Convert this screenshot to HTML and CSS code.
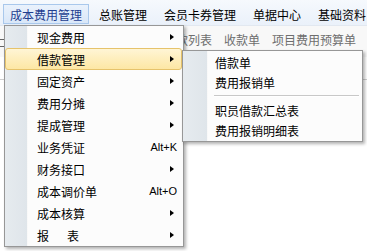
FILE: index.html
```html
<!DOCTYPE html>
<html lang="zh-CN">
<head>
    <meta charset="UTF-8">
    <title>成本费用管理</title>
    <link rel="stylesheet" href="styles.css">
</head>
<body>

<div class="menubar">
    <div class="bar-item active">成本费用管理</div>
    <div class="bar-item">总账管理</div>
    <div class="bar-item">会员卡券管理</div>
    <div class="bar-item">单据中心</div>
    <div class="bar-item">基础资料</div>
</div>

<div class="toolbar">
    <span class="tool-icon"></span>
    <span class="tool">付款列表</span>
    <span class="tool">收款单</span>
    <span class="tool">项目费用预算单</span>
</div>

<div class="content"></div>

<!-- 下拉菜单 -->
<div class="dropdown">
    <div class="menu-item">现金费用<span class="arrow"></span></div>
    <div class="menu-item selected">借款管理<span class="arrow"></span></div>
    <div class="menu-item">固定资产<span class="arrow"></span></div>
    <div class="menu-item">费用分摊<span class="arrow"></span></div>
    <div class="menu-item">提成管理<span class="arrow"></span></div>
    <div class="menu-item">业务凭证<span class="shortcut">Alt+K</span></div>
    <div class="menu-item">财务接口<span class="arrow"></span></div>
    <div class="menu-item">成本调价单<span class="shortcut">Alt+O</span></div>
    <div class="menu-item">成本核算<span class="arrow"></span></div>
    <div class="menu-item">报&emsp;&ensp;表<span class="arrow"></span></div>
</div>

<!-- 子菜单 -->
<div class="submenu">
    <div class="sub-item">借款单</div>
    <div class="sub-item">费用报销单</div>
    <div class="separator"></div>
    <div class="sub-item">职员借款汇总表</div>
    <div class="sub-item">费用报销明细表</div>
</div>

</body>
</html>
```

FILE: styles.css
```css
body {
    margin: 0;
    padding: 0;
    width: 367px;
    height: 251px;
    overflow: hidden;
    position: relative;
    background-color: #ffffff;
    font-family: "Noto Sans CJK SC", "Noto Sans", sans-serif;
    font-size: 12px;
    color: #000;
}

.menubar {
    display: flex;
    align-items: flex-start;
    gap: 3px;
    height: 25px;
    padding-left: 3px;
    background: linear-gradient(#f6f9fd, #eaf1fa);
    box-sizing: border-box;
}

.bar-item {
    margin-top: 4px;
    height: 20px;
    line-height: 19px;
    padding: 0 6px;
    border: 1px solid transparent;
    box-sizing: border-box;
    white-space: nowrap;
}

.bar-item.active {
    background: linear-gradient(#eaf2fc, #d9e7f8);
    border-color: #a9c8ec;
    color: #1e3e90;
}

.toolbar {
    display: flex;
    align-items: center;
    gap: 12px;
    height: 32px;
    padding: 0 0 4px 164px;
    box-sizing: border-box;
    background-color: #f8f8f8;
    border-top: 1px solid #e2e8f0;
    color: #6e6e6e;
    position: relative;
}

.tool {
    white-space: nowrap;
}

/* pequeño icono a la izquierda, casi tapado por el menú */
.tool-icon {
    position: absolute;
    left: 0;
    top: 13px;
    width: 4px;
    height: 6px;
    border-top: 1px solid #666;
    border-bottom: 1px solid #666;
}

.content {
    margin-top: 22px;
    border-top: 1px solid #cfcfcf;
    height: 100px;
}

.dropdown {
    position: absolute;
    left: 4px;
    top: 25px;
    width: 180px;
    border: 1px solid #979797;
    box-sizing: border-box;
    background: linear-gradient(to right, #e6ebef 0, #dfe5ea 22px, #f5f5f5 22px, #fcfcfc 23px, #fcfcfc);
    box-shadow: 2px 2px 3px rgba(0, 0, 0, 0.3);
}

.menu-item {
    position: relative;
    height: 22px;
    line-height: 21px;
    padding-left: 31px;
    border: 1px solid transparent;
    border-radius: 3px;
    margin-right: 1px;
    box-sizing: border-box;
}

.menu-item.selected {
    background: linear-gradient(#fff5d5, #fde7a4);
    border-color: #e6c36b;
}

.arrow {
    position: absolute;
    right: 7px;
    top: 7px;
    width: 0;
    height: 0;
    border-top: 3.5px solid transparent;
    border-bottom: 3.5px solid transparent;
    border-left: 4px solid #000;
}

.shortcut {
    position: absolute;
    right: 4px;
    top: 0;
    font-family: "Liberation Sans", Arial, sans-serif;
    font-size: 11px;
}

.submenu {
    position: absolute;
    left: 182px;
    top: 50px;
    width: 181px;
    padding-top: 2px;
    border: 1px solid #979797;
    box-sizing: border-box;
    background: linear-gradient(to right, #e6ebef 0, #dfe5ea 24px, #f5f5f5 24px, #fcfcfc 25px, #fcfcfc);
    box-shadow: 2px 2px 3px rgba(0, 0, 0, 0.3);
}

.sub-item {
    height: 20px;
    line-height: 20px;
    padding-left: 32px;
}

.separator {
    height: 8px;
    margin-left: 31px;
    margin-right: 3px;
    box-sizing: border-box;
    padding-top: 2px;
}

.separator::before {
    content: "";
    display: block;
    height: 1px;
    background-color: #c8c8c8;
    border-bottom: 1px solid #ffffff;
}
```
